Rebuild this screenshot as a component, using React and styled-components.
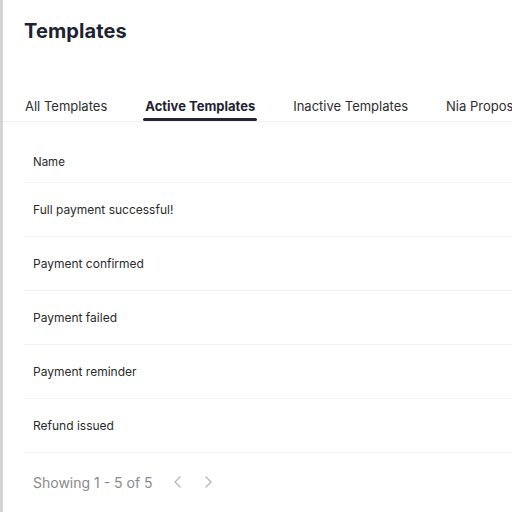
import styled, { createGlobalStyle } from "styled-components"

const GlobalStyle = createGlobalStyle`
    html, body {
        margin: 0;
        padding: 0;
        background: #ffffff;
    }
    body {
        font-family: Inter, "Liberation Sans", sans-serif;
        color: #1f2430;
    }
`

const Page = styled.div`
    width: 512px;
    height: 512px;
    overflow: hidden;
    border-left: 3px solid #d4d4d4;
    box-sizing: border-box;
    display: flex;
    flex-direction: column;
    & > * {
        flex-shrink: 0;
    }
`

const Header = styled.div`
    padding: 19px 21px 0;
    height: 62px;
    box-sizing: border-box;
`

const Title = styled.h1`
    margin: 0;
    font-size: 20px;
    font-weight: 700;
    color: #1e2331;
    letter-spacing: 0.1px;
`

const TabBar = styled.div`
    display: flex;
    gap: 34px;
    padding: 0 20px;
    border-bottom: 1px solid #f0f0f0;
    white-space: nowrap;
    height: 60px;
    box-sizing: border-box;
    align-items: flex-end;
`

const Tab = styled.div`
    position: relative;
    padding: 0 2px 7px;
    font-size: 13px;
    font-weight: ${props => (props.active ? 700 : 400)};
    color: ${props => (props.active ? "#1e2331" : "#2e2e2e")};
    &::after {
        content: "";
        display: ${props => (props.active ? "block" : "none")};
        position: absolute;
        left: 0;
        right: 0;
        bottom: 0;
        height: 3px;
        border-radius: 2px;
        background: #1f2736;
    }
`

const Table = styled.div`
    margin: 19px 0 0 21px;
`

const Row = styled.div`
    display: flex;
    align-items: center;
    height: 54px;
    box-sizing: border-box;
    padding-left: 9px;
    border-bottom: 1px solid #f2f2f2;
    font-size: 12px;
    color: #2a2a2a;
`

const HeadRow = styled(Row)`
    height: 42px;
    font-size: 11.5px;
`

const Footer = styled.div`
    display: flex;
    align-items: center;
    height: 58px;
    padding-left: 9px;
    font-size: 14px;
    color: #8a8a8a;
    gap: 18px;
`

const Pager = styled.div`
    display: flex;
    gap: 16px;
    color: #b5b5b5;
`

const Chevron = ({ dir }) => (
    <svg width="14" height="14" viewBox="0 0 14 14" fill="none" stroke="currentColor" strokeWidth="1.3" strokeLinecap="round" strokeLinejoin="round">
        {dir === "left" ? <path d="M9 2L4 7l5 5" /> : <path d="M5 2l5 5-5 5" />}
    </svg>
)

const rows = [
    "Full payment successful!",
    "Payment confirmed",
    "Payment failed",
    "Payment reminder",
    "Refund issued",
]

const App = () => {
    return (
        <Page>
            <GlobalStyle />
            <Header>
                <Title>Templates</Title>
            </Header>
            <TabBar>
                <Tab>All Templates</Tab>
                <Tab active>Active Templates</Tab>
                <Tab>Inactive Templates</Tab>
                <Tab>Nia Proposals</Tab>
            </TabBar>
            <Table>
                <HeadRow>Name</HeadRow>
                {rows.map(name => (
                    <Row key={name}>{name}</Row>
                ))}
                <Footer>
                    Showing 1 - 5 of 5
                    <Pager>
                        <Chevron dir="left" />
                        <Chevron dir="right" />
                    </Pager>
                </Footer>
            </Table>
        </Page>
    )
}

export default App
